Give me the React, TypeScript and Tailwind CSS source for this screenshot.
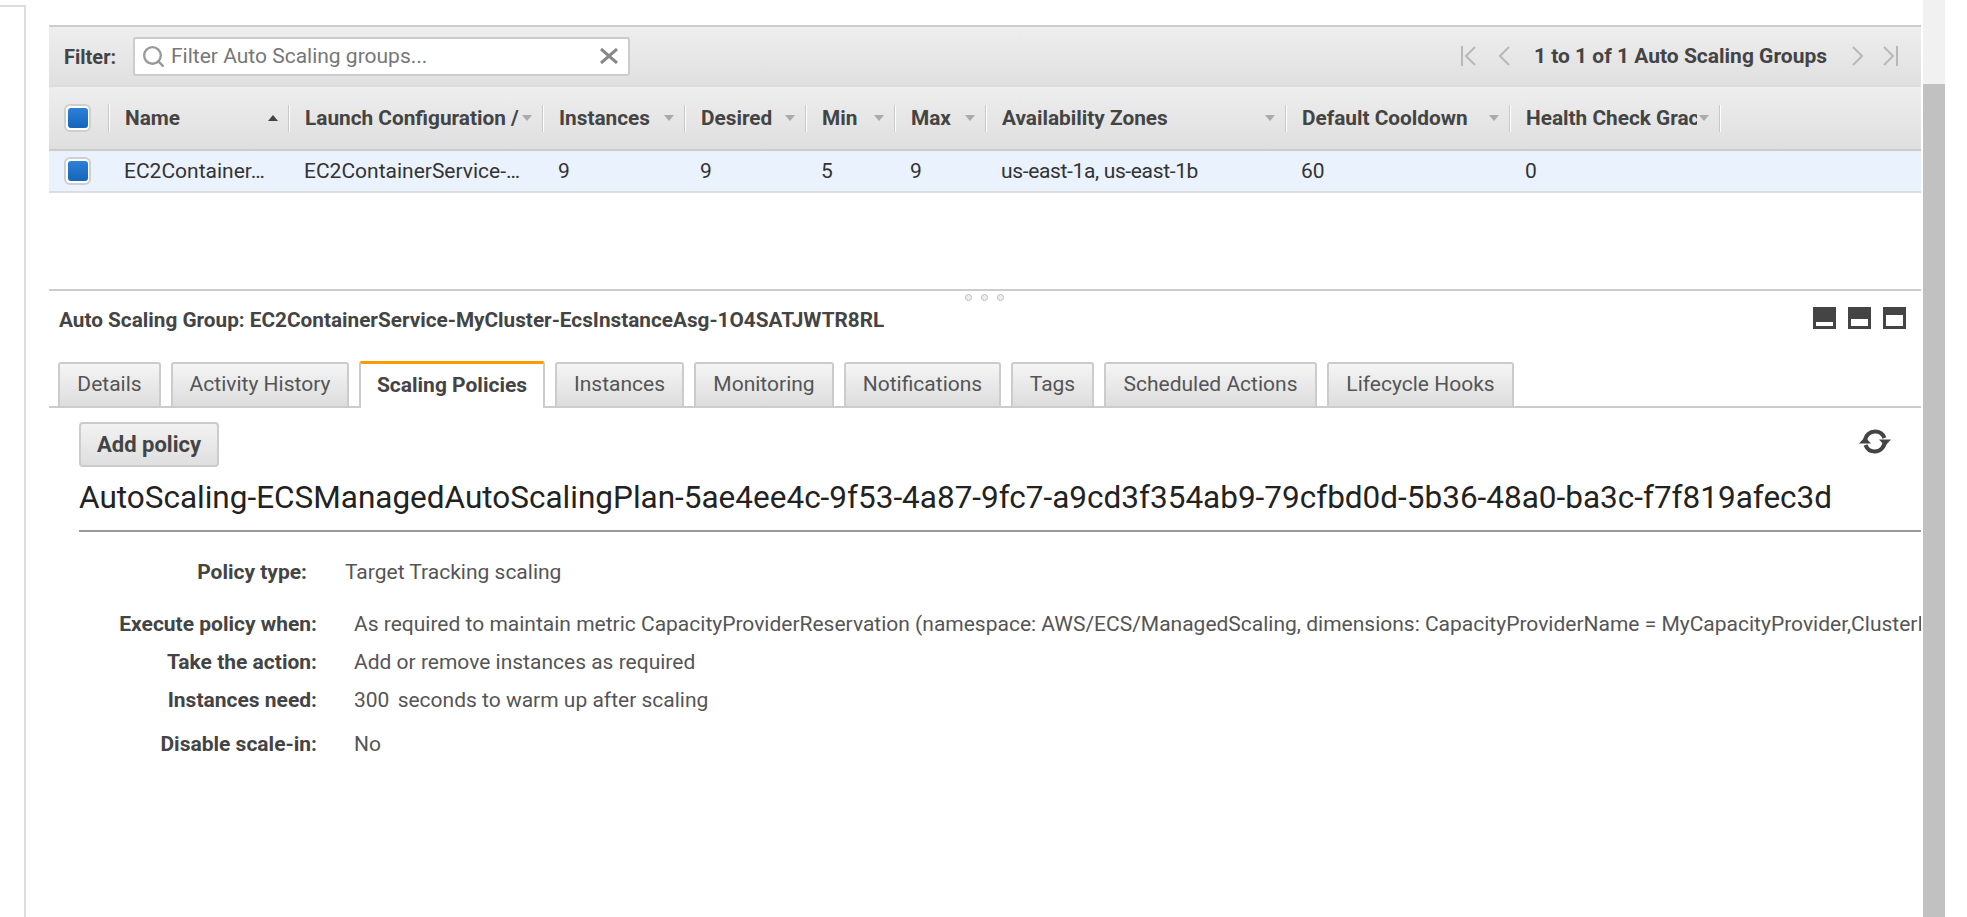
import { Search } from "lucide-react";

const columns = [
  { label: "Name", value: "EC2Container…", sorted: true },
  { label: "Launch Configuration /", value: "EC2ContainerService-…" },
  { label: "Instances", value: "9" },
  { label: "Desired", value: "9" },
  { label: "Min", value: "5" },
  { label: "Max", value: "9" },
  { label: "Availability Zones", value: "us-east-1a, us-east-1b", tight: true },
  { label: "Default Cooldown", value: "60" },
  { label: "Health Check Grace Period", value: "0" },
];

const tabs = [
  { name: "Details", width: "w-[103px]" },
  { name: "Activity History", width: "w-[178px]" },
  { name: "Scaling Policies", width: "w-[186px]", active: true },
  { name: "Instances", width: "w-[129px]" },
  { name: "Monitoring", width: "w-[140px]" },
  { name: "Notifications", width: "w-[157px]" },
  { name: "Tags", width: "w-[83px]" },
  { name: "Scheduled Actions", width: "w-[213px]" },
  { name: "Lifecycle Hooks", width: "w-[187px]" },
];

const gridCols =
  "grid grid-cols-[60px_180px_254px_142px_121px_89px_91px_300px_224px_210px_1fr]";

const Checkbox = () => (
  <div className="flex h-[28px] w-[27px] items-center justify-center rounded-[6px] border-2 border-[#cfcfcf] bg-white">
    <div className="h-[20px] w-[20px] rounded-[3px] bg-gradient-to-b from-[#2b80d8] to-[#1566ba]" />
  </div>
);

const PagerEdge = ({ flip }: { flip?: boolean }) => (
  <svg width="15" height="20" viewBox="0 0 15 20" fill="none" stroke="#b8b8b8" strokeWidth="2" className={flip ? "rotate-180" : ""}>
    <path d="M1 0v20M14 1 5 10l9 9" />
  </svg>
);

const PagerChevron = ({ flip }: { flip?: boolean }) => (
  <svg width="11" height="20" viewBox="0 0 11 20" fill="none" stroke="#b8b8b8" strokeWidth="2" className={flip ? "rotate-180" : ""}>
    <path d="M10 1 1 10l9 9" />
  </svg>
);

const WindowButton = ({ fill }: { fill: string }) => (
  <div className="flex h-[22px] w-[23px] items-end justify-center bg-[#444] px-[3px] pb-[3px]">
    <div className={`w-full bg-white ${fill}`} />
  </div>
);

const RefreshIcon = () => (
  <svg width="32" height="25" viewBox="0 0 32 25" fill="none">
    <path d="M6 12C6.500 6 11 2.500 16 2.500C20.500 2.500 24 5 25.500 9" stroke="#444" strokeWidth="4" />
    <path d="M26 12C25.500 18.500 21 22.500 16 22.500C11.500 22.500 8 20 6.500 16" stroke="#444" strokeWidth="4" />
    <path d="M20 10.500H32L26 17Z" fill="#444" />
    <path d="M0 14.500H12L6 8Z" fill="#444" />
  </svg>
);

const DetailRow = ({ label, children, className }: { label: string; children: React.ReactNode; className: string }) => (
  <div className={`flex h-[38px] items-center whitespace-nowrap text-[21px] ${className}`}>
    <div className="w-[238px] shrink-0 text-right font-bold text-[#444]">{label}</div>
    <div className="ml-[37px] text-[#555]">{children}</div>
  </div>
);

export default function App() {
  return (
    <div className="flex h-[917px] w-[1967px] overflow-hidden bg-white font-['Roboto',sans-serif]">
      {/* left nav edge */}
      <div className="mt-[5px] h-[912px] w-[26px] shrink-0 border-t-2 border-r-2 border-[#ddd]" />

      <div className="ml-[23px] flex w-[1872px] shrink-0 flex-col overflow-hidden pt-[25px]">
        {/* Filter bar */}
        <div className="flex h-[62px] items-center justify-between border-y-2 border-t-[#ccc] border-b-[#dcdcdc] bg-gradient-to-b from-[#eeeeee] to-[#e0e0e0] pr-[23px] pl-[15px]">
          <div className="flex items-center">
            <span className="w-[69px] pt-[1px] text-[20px] font-bold text-[#444]">Filter:</span>
            <div className="flex h-[39px] w-[497px] items-center rounded-[3px] border-2 border-[#ccc] bg-white pr-[10px] pl-[6px]">
              <Search size={25} strokeWidth={2.250} color="#999" />
              <span className="ml-[5px] flex-1 pt-[1px] text-[21px] text-[#777]">Filter Auto Scaling groups...</span>
              <svg width="18" height="16" viewBox="0 0 18 16" stroke="#888" strokeWidth="3" fill="none">
                <path d="M1 1l16 14M17 1 1 15" />
              </svg>
            </div>
          </div>
          <div className="flex items-center">
            <PagerEdge />
            <div className="ml-[23px] flex">
              <PagerChevron />
            </div>
            <span className="mr-[25px] ml-[24px] pt-[1px] text-[21px] font-bold text-[#444]">1 to 1 of 1 Auto Scaling Groups</span>
            <PagerChevron flip />
            <div className="ml-[20px] flex">
              <PagerEdge flip />
            </div>
          </div>
        </div>

        {/* Table header */}
        <div className={`${gridCols} h-[64px] items-center border-b-2 border-[#ccc] bg-gradient-to-b from-[#eeeeee] to-[#dfdfdf]`}>
          <div className="flex h-[28px] items-center border-r border-[#c8c8c8] pl-[15px] shadow-[1px_0_0_#fff]">
            <Checkbox />
          </div>
          {columns.map((col) => (
            <div
              key={col.label}
              className="flex h-[27px] items-center justify-between overflow-hidden border-r border-[#c8c8c8] pr-[10px] pl-[16px] shadow-[1px_0_0_#fff]"
            >
              <span className="overflow-hidden pt-[1px] text-[20.800px] font-bold whitespace-nowrap text-[#444]">{col.label}</span>
              {col.sorted ? (
                <div className="ml-[2px] h-0 w-0 shrink-0 border-x-[5px] border-b-[6px] border-x-transparent border-b-[#444]" />
              ) : (
                <div className="ml-[2px] h-0 w-0 shrink-0 border-x-[5px] border-t-[6px] border-x-transparent border-t-[#aaa]" />
              )}
            </div>
          ))}
        </div>

        {/* Selected row */}
        <div className={`${gridCols} h-[42px] items-center border-b-2 border-[#ddd] bg-[#eaf2fd] pt-[2px]`}>
          <div className="-mt-[2px] pl-[15px]">
            <Checkbox />
          </div>
          {columns.map((col) => (
            <div
              key={col.label}
              className={`overflow-hidden pl-[15px] text-[21px] whitespace-nowrap text-[#333] ${col.tight ? "tracking-[-0.35px]" : ""}`}
            >
              {col.value}
            </div>
          ))}
        </div>

        {/* Empty table space */}
        <div className="h-[96px]" />

        {/* Detail pane */}
        <div className="relative border-t-2 border-[#ccc]">
          <div className="absolute top-[3px] left-[916px] flex gap-[9px]">
            <div className="h-[7px] w-[7px] rounded-full border border-[#bbb] bg-[#eee]" />
            <div className="h-[7px] w-[7px] rounded-full border border-[#bbb] bg-[#eee]" />
            <div className="h-[7px] w-[7px] rounded-full border border-[#bbb] bg-[#eee]" />
          </div>

          <div className="flex h-[72px] items-start justify-between pt-[16px] pr-[15px] pl-[10px]">
            <span className="text-[20.750px] leading-[26px] font-bold text-[#444]">Auto Scaling Group: EC2ContainerService-MyCluster-EcsInstanceAsg-1O4SATJWTR8RL</span>
            <div className="flex gap-[12px]">
              <WindowButton fill="h-[4px]" />
              <WindowButton fill="h-[7px]" />
              <WindowButton fill="h-[11px]" />
            </div>
          </div>

          {/* Tabs */}
          <div className="flex h-[45px] items-end gap-[10px] border-b-2 border-[#ccc] pl-[9px]">
            {tabs.map((tab) =>
              tab.active ? (
                <div
                  key={tab.name}
                  className={`${tab.width} -mb-[2px] flex h-[47px] items-center justify-center rounded-t-[3px] border-x-2 border-t-[3px] border-x-[#ccc] border-t-[#f90] bg-white text-[21px] font-bold text-[#444]`}
                >
                  {tab.name}
                </div>
              ) : (
                <div
                  key={tab.name}
                  className={`${tab.width} flex h-[44px] items-center justify-center rounded-t-[3px] border-x-2 border-t-2 border-[#ccc] bg-gradient-to-b from-[#f5f5f5] to-[#dddddd] text-[21px] text-[#555]`}
                >
                  {tab.name}
                </div>
              )
            )}
          </div>

          {/* Scaling policies */}
          <div className="flex items-start justify-between pt-[14px] pr-[30px] pl-[30px]">
            <button className="flex h-[45px] w-[140px] items-center justify-center rounded-[4px] border-2 border-[#ccc] bg-gradient-to-b from-[#f2f2f2] to-[#dfdfdf] text-[22px] font-bold text-[#444]">
              Add policy
            </button>
            <div className="mt-[7px]">
              <RefreshIcon />
            </div>
          </div>

          <div className="ml-[30px] flex h-[65px] items-center border-b-2 border-[#999] pb-[1px] text-[31.500px] whitespace-nowrap text-[#222]">
            AutoScaling-ECSManagedAutoScalingPlan-5ae4ee4c-9f53-4a87-9fc7-a9cd3f354ab9-79cfbd0d-5b36-48a0-ba3c-f7f819afec3d
          </div>

          <div className="mt-[21px] flex h-[40px] items-center text-[21px] whitespace-nowrap">
            <div className="w-[258px] shrink-0 text-right font-bold text-[#444]">Policy type:</div>
            <div className="ml-[38px] text-[#555]">Target Tracking scaling</div>
          </div>

          <div className="mt-[13px] overflow-hidden">
            <DetailRow label="Execute policy when:" className="ml-[30px]">
              As required to maintain metric CapacityProviderReservation (namespace: AWS/ECS/ManagedScaling, dimensions: CapacityProviderName = MyCapacityProvider,ClusterName = MyCluster)
            </DetailRow>
            <DetailRow label="Take the action:" className="ml-[30px]">
              Add or remove instances as required
            </DetailRow>
            <DetailRow label="Instances need:" className="ml-[30px]">
              <span className="mr-[3px]">300</span> seconds to warm up after scaling
            </DetailRow>
            <DetailRow label="Disable scale-in:" className="mt-[6px] ml-[30px]">
              No
            </DetailRow>
          </div>
        </div>
      </div>

      {/* Page scrollbar */}
      <div className="ml-[2px] flex h-full w-[22px] shrink-0 flex-col bg-[#f1f1f1]">
        <div className="h-[84px] shrink-0" />
        <div className="flex-1 bg-[#c1c1c1]" />
      </div>
    </div>
  );
}
